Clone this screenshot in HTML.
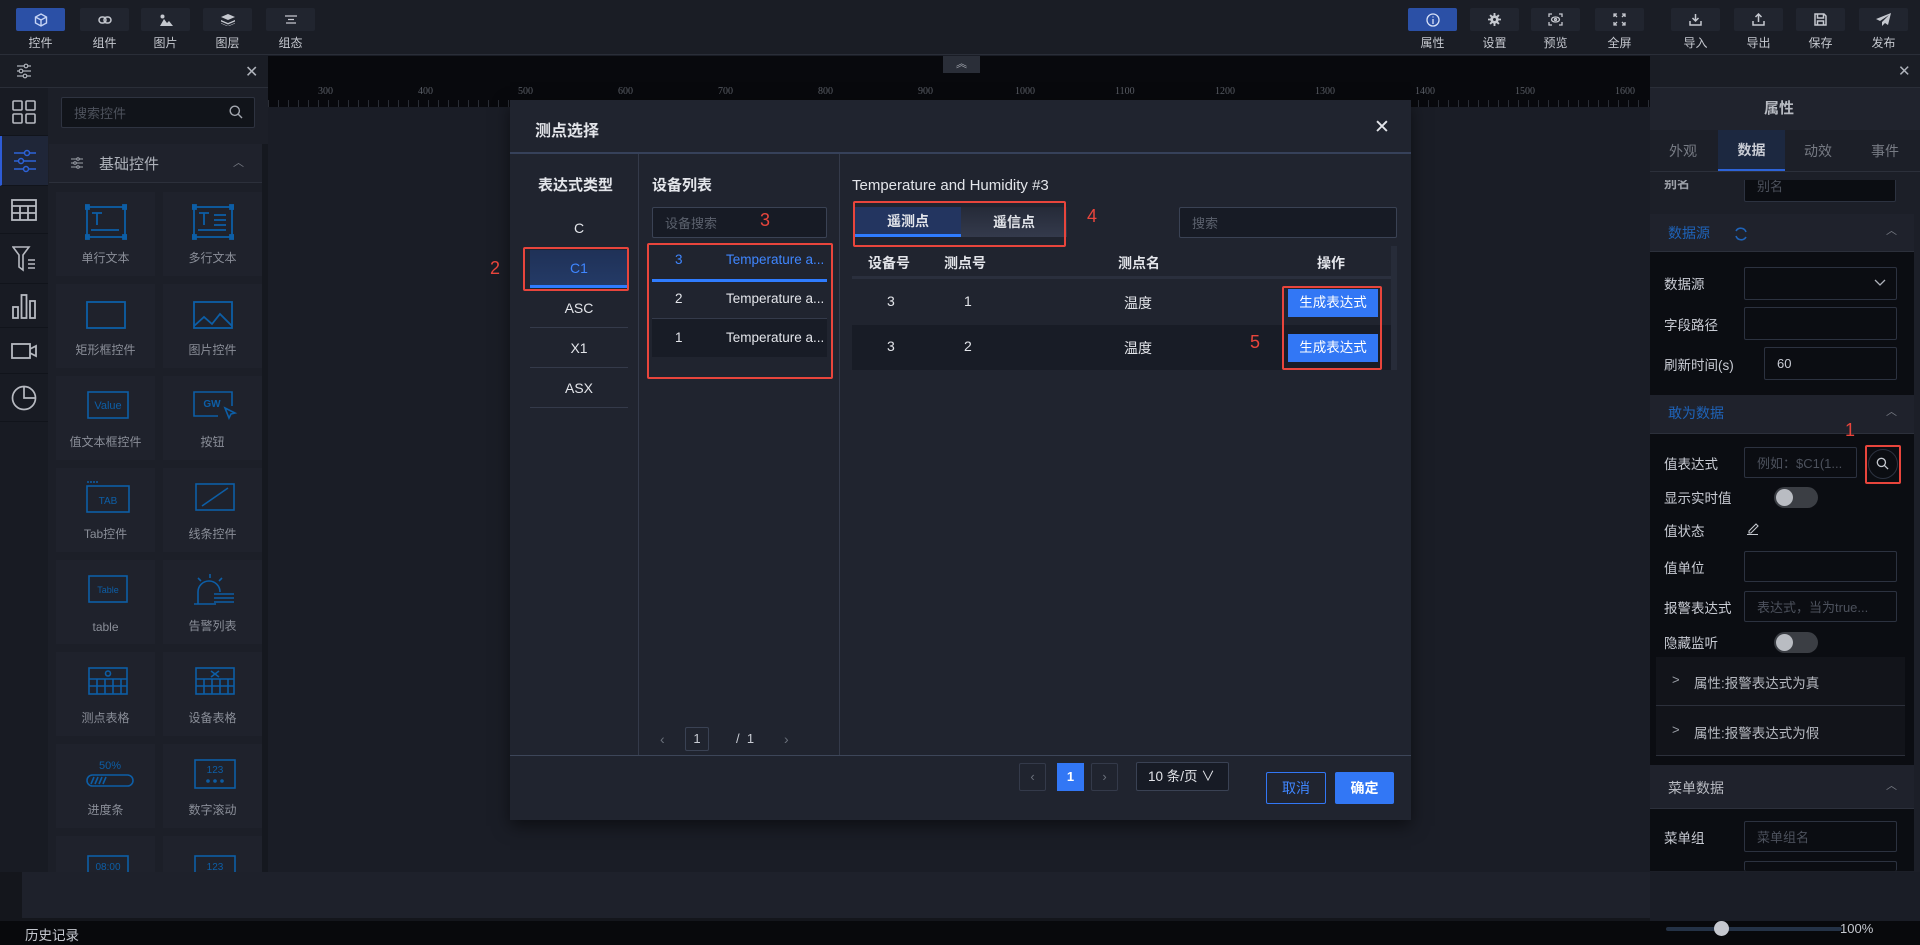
<!DOCTYPE html>
<html><head><meta charset="utf-8"><style>
*{box-sizing:border-box;margin:0;padding:0}
body{width:1920px;height:945px;overflow:hidden;background:#1a1d26;font-family:"Liberation Sans","Noto Sans CJK SC",sans-serif;color:#c9ccd4;font-size:13px;position:relative}
.a{position:absolute}
.tb{position:absolute;top:8px;width:49px;height:23px;background:#21252f;border-radius:2px;display:flex;align-items:center;justify-content:center}
.tl{position:absolute;top:34px;width:49px;text-align:center;font-size:12px;color:#c5c8cf}
.ic{position:absolute;left:0;width:48px;height:48px;display:flex;align-items:center;justify-content:center;border-bottom:1px solid #11141b}
.gi{position:absolute;width:99px;height:84px;background:#1f222c}
.gi .t{position:absolute;bottom:10px;left:0;right:0;text-align:center;font-size:12px;color:#8a8e98}
.gi svg{position:absolute;left:29px;top:12px}
.lbl{position:absolute;left:1664px;font-size:13.5px;color:#c9ccd4;transform:translateY(-50%)}
.inp{position:absolute;border:1px solid #2c3240;background:#0b0d12;border-radius:2px;font-size:13px;color:#4c515c;padding-left:12px;display:flex;align-items:center}
.tog{position:absolute;width:44px;height:21px;border-radius:11px;background:#3b3e44}
.tog:after{content:"";position:absolute;left:2px;top:2px;width:17px;height:17px;border-radius:50%;background:#b9bcc2}
.red{position:absolute;border:2px solid #e8453c;border-radius:2px}
.num{position:absolute;color:#e8453c;font-size:18px}
</style></head><body>
<!-- top bar -->
<div class="a" style="left:0;top:0;width:1920px;height:55px;background:#1a1d25;border-bottom:1px solid #2a2e38"></div>
<div class="tb" style="left:16px;background:#2b50a6"><svg width="14" height="14" viewBox="0 0 14 14" fill="none" stroke="#c6d4f5" stroke-width="1.4"><path d="M7 1L12.5 4v6L7 13 1.5 10V4z M1.5 4L7 7l5.5-3 M7 7v6"/></svg></div><div class="tl" style="left:16px">控件</div>
<div class="tb" style="left:80px"><svg width="14" height="10" viewBox="0 0 14 10" fill="none" stroke="#c5c8cf" stroke-width="1.5"><rect x="1" y="2" width="7" height="6" rx="3"/><rect x="6" y="2" width="7" height="6" rx="3"/></svg></div><div class="tl" style="left:80px">组件</div>
<div class="tb" style="left:141px"><svg width="14" height="12" viewBox="0 0 14 12" fill="#c5c8cf"><circle cx="3.5" cy="2.5" r="2"/><path d="M1 12L5 5l3 4 2-2 4 5z"/></svg></div><div class="tl" style="left:141px">图片</div>
<div class="tb" style="left:203px"><svg width="14" height="12" viewBox="0 0 14 12" fill="#c5c8cf"><path d="M7 0L14 3 7 6 0 3z"/><path d="M0 6l7 3 7-3v1.5L7 10.5 0 7.5z"/><path d="M0 9l7 3 7-3v.5L7 12.5 0 9.5z"/></svg></div><div class="tl" style="left:203px">图层</div>
<div class="tb" style="left:266px"><svg width="12" height="9" viewBox="0 0 12 9" stroke="#c5c8cf" stroke-width="1.3"><path d="M0 1h12M3 4.5h6M1 8h10"/></svg></div><div class="tl" style="left:266px">组态</div>

<div class="tb" style="left:1408px;background:#2b50a6"><svg width="14" height="14" viewBox="0 0 14 14" fill="none" stroke="#d9e2f7" stroke-width="1.3"><circle cx="7" cy="7" r="6"/><path d="M7 6v5M7 3.5v1"/></svg></div><div class="tl" style="left:1408px">属性</div>
<div class="tb" style="left:1470px"><svg width="13" height="13" viewBox="0 0 14 14" fill="#c5c8cf"><circle cx="7" cy="7" r="4.5"/><path d="M6 0h2v3H6zM6 11h2v3H6zM0 6h3v2H0zM11 6h3v2h-3zM1.5 3L3 1.5 5 3.5 3.5 5zM9 10.5l1.5-1.5 2 2-1.5 1.5zM1.5 11L3.5 9 5 10.5 3 12.5zM9 3.5L11 1.5l1.5 1.5-2 2z"/><circle cx="7" cy="7" r="1.6" fill="#21252f"/></svg></div><div class="tl" style="left:1470px">设置</div>
<div class="tb" style="left:1531px"><svg width="15" height="13" viewBox="0 0 15 13" fill="none" stroke="#c5c8cf" stroke-width="1.3"><path d="M1 4V1h3M11 1h3v3M14 9v3h-3M4 12H1V9"/><ellipse cx="7.5" cy="6.5" rx="4" ry="2.5"/><circle cx="7.5" cy="6.5" r="1"/></svg></div><div class="tl" style="left:1531px">预览</div>
<div class="tb" style="left:1595px"><svg width="13" height="13" viewBox="0 0 13 13" fill="none" stroke="#c5c8cf" stroke-width="1.3"><path d="M1 4V1h3M9 1h3v3M12 9v3H9M4 12H1V9M1 1l3 3M12 1L9 4M12 12L9 9M1 12l3-3"/></svg></div><div class="tl" style="left:1595px">全屏</div>
<div class="tb" style="left:1671px"><svg width="13" height="13" viewBox="0 0 13 13" fill="none" stroke="#c5c8cf" stroke-width="1.5"><path d="M6.5 1v7M3.5 5l3 3 3-3M1 8v4h11V8"/></svg></div><div class="tl" style="left:1671px">导入</div>
<div class="tb" style="left:1734px"><svg width="13" height="13" viewBox="0 0 13 13" fill="none" stroke="#c5c8cf" stroke-width="1.5"><path d="M6.5 9V1M3.5 4l3-3 3 3M1 8v4h11V8"/></svg></div><div class="tl" style="left:1734px">导出</div>
<div class="tb" style="left:1796px"><svg width="13" height="13" viewBox="0 0 13 13" fill="none" stroke="#c5c8cf" stroke-width="1.5"><path d="M1 1h9l2 2v9H1z M3.5 1v4h6V1 M3.5 12V8h6v4"/></svg></div><div class="tl" style="left:1796px">保存</div>
<div class="tb" style="left:1859px"><svg width="15" height="13" viewBox="0 0 15 13" fill="#c5c8cf"><path d="M15 0L0 6l4 2 9-6-7 7v4l3-3 3 2z"/></svg></div><div class="tl" style="left:1859px">发布</div>

<!-- left panel -->
<div class="a" style="left:0;top:56px;width:268px;height:816px;background:#1c1f28"></div>
<div class="a" style="left:0;top:56px;width:268px;height:32px;border-bottom:1px solid #2a2e38;background:#1a1d25"></div>
<svg class="a" style="left:16px;top:63px" width="16" height="16" viewBox="0 0 16 16" fill="none" stroke="#aeb2ba" stroke-width="1.2"><path d="M1 3h14M1 8h14M1 13h14"/><circle cx="10" cy="3" r="1.8" fill="#1a1d25"/><circle cx="5" cy="8" r="1.8" fill="#1a1d25"/><circle cx="9" cy="13" r="1.8" fill="#1a1d25"/></svg>
<div class="a" style="left:245px;top:62px;font-size:16px;color:#aeb2ba">✕</div>
<div class="a" style="left:0;top:88px;width:48px;height:784px;background:#181b23"></div>
<div class="ic" style="top:88px"><svg width="24" height="24" viewBox="0 0 24 24" fill="none" stroke="#b7bac1" stroke-width="1.6"><rect x="1" y="1" width="9" height="9" rx="1"/><rect x="14" y="1" width="9" height="9" rx="1"/><rect x="1" y="14" width="9" height="9" rx="1"/><rect x="14" y="14" width="9" height="9" rx="1"/></svg></div>
<div class="ic" style="top:136px;height:50px;background:#1f2638;border-left:2px solid #2d5bd6"><svg width="24" height="24" viewBox="0 0 24 24" fill="none" stroke="#2d63d8" stroke-width="1.5"><path d="M1 4h22M1 12h22M1 20h22"/><circle cx="14" cy="4" r="2.5" fill="#1f2638"/><circle cx="8" cy="12" r="2.5" fill="#1f2638"/><circle cx="13" cy="20" r="2.5" fill="#1f2638"/></svg></div>
<div class="ic" style="top:186px"><svg width="26" height="22" viewBox="0 0 26 22" fill="none" stroke="#b7bac1" stroke-width="1.8"><rect x="1" y="1" width="24" height="20"/><path d="M1 7h24M1 14h24M9 7v14M17 7v14"/></svg></div>
<div class="ic" style="top:234px;height:50px"><svg width="24" height="26" viewBox="0 0 24 26" fill="none" stroke="#b7bac1" stroke-width="1.6"><path d="M1 1h16l-6 8v15l-4-3V9z M16 14h7M16 18h7M16 22h7"/></svg></div>
<div class="ic" style="top:284px;height:44px"><svg width="24" height="26" viewBox="0 0 24 26" fill="none" stroke="#b7bac1" stroke-width="1.8"><rect x="1" y="14" width="5" height="11"/><rect x="9.5" y="2" width="5" height="23"/><rect x="18" y="8" width="5" height="17"/></svg></div>
<div class="ic" style="top:328px;height:46px"><svg width="26" height="18" viewBox="0 0 26 18" fill="none" stroke="#b7bac1" stroke-width="1.8"><rect x="1" y="2" width="18" height="14"/><path d="M19 7l6-3v10l-6-3"/></svg></div>
<div class="ic" style="top:374px;height:48px"><svg width="26" height="26" viewBox="0 0 26 26" fill="none" stroke="#b7bac1" stroke-width="1.7"><circle cx="13" cy="13" r="11.5"/><path d="M13 1.5V13h11.5"/></svg></div>
<div class="inp" style="left:61px;top:97px;width:194px;height:31px;background:#11141a;border-color:#2e3340;color:#4d525c">搜索控件</div>
<svg class="a" style="left:229px;top:105px" width="14" height="14" viewBox="0 0 14 14" fill="none" stroke="#a3a7af" stroke-width="1.4"><circle cx="5.8" cy="5.8" r="4.6"/><path d="M9.3 9.3L13 13"/></svg>
<div class="a" style="left:49px;top:144px;width:213px;height:39px;background:#1f222c;border-bottom:1px solid #2c303b"></div>
<svg class="a" style="left:71px;top:157px" width="12" height="12" viewBox="0 0 12 12" fill="none" stroke="#9da1a9" stroke-width="1"><path d="M0 2h12M0 6h12M0 10h12"/><circle cx="7" cy="2" r="1.3" fill="#1f222c"/><circle cx="4" cy="6" r="1.3" fill="#1f222c"/><circle cx="7" cy="10" r="1.3" fill="#1f222c"/></svg>
<div class="a" style="left:99px;top:153px;font-size:15px;color:#aeb2ba">基础控件</div>
<div class="a" style="left:233px;top:154px;font-size:11px;color:#777b84">︿</div>
<div class="a" style="left:262px;top:144px;width:6px;height:728px;background:#15181f"></div>

<div class="gi" style="left:56px;top:192px"><svg width="42" height="36" viewBox="0 0 42 36" fill="none" stroke="#0d5ea6" stroke-width="1.8"><rect x="2" y="3" width="38" height="30"/><path d="M6 26h28M7 9h10M12 9v12"/><g fill="#0d5ea6"><rect x="0" y="1" width="4" height="4"/><rect x="38" y="1" width="4" height="4"/><rect x="0" y="31" width="4" height="4"/><rect x="38" y="31" width="4" height="4"/></g></svg><div class="t">单行文本</div></div>
<div class="gi" style="left:163px;top:192px"><svg width="42" height="36" viewBox="0 0 42 36" fill="none" stroke="#0d5ea6" stroke-width="1.8"><rect x="2" y="3" width="38" height="30"/><path d="M6 26h28M7 9h10M12 9v12M22 11h12M22 16h12M22 21h12"/><g fill="#0d5ea6"><rect x="0" y="1" width="4" height="4"/><rect x="38" y="1" width="4" height="4"/><rect x="0" y="31" width="4" height="4"/><rect x="38" y="31" width="4" height="4"/></g></svg><div class="t">多行文本</div></div>
<div class="gi" style="left:56px;top:284px"><svg width="42" height="36" viewBox="0 0 42 36" fill="none" stroke="#0d5ea6" stroke-width="1.8"><rect x="2" y="6" width="38" height="26"/></svg><div class="t">矩形框控件</div></div>
<div class="gi" style="left:163px;top:284px"><svg width="42" height="36" viewBox="0 0 42 36" fill="none" stroke="#0d5ea6" stroke-width="1.8"><rect x="2" y="6" width="38" height="26"/><path d="M2 30l10-9 8 7 8-10 12 12"/></svg><div class="t">图片控件</div></div>
<div class="gi" style="left:56px;top:376px"><svg width="46" height="34" viewBox="0 0 46 34" fill="none" stroke="#0d5ea6" stroke-width="1.6"><rect x="3" y="4" width="40" height="26"/><text x="23" y="21" font-size="11" fill="#0d5ea6" stroke="none" text-anchor="middle" font-family="Liberation Sans">Value</text></svg><div class="t">值文本框控件</div></div>
<div class="gi" style="left:163px;top:376px"><svg width="46" height="34" viewBox="0 0 46 34" fill="none" stroke="#0d5ea6" stroke-width="1.6"><path d="M40 18V4H2v24h24"/><path d="M33 20l10 5-4 1-2 4z"/><text x="20" y="19" font-size="10" fill="#0d5ea6" stroke="none" text-anchor="middle" font-family="Liberation Sans" font-weight="bold">GW</text></svg><div class="t">按钮</div></div>
<div class="gi" style="left:56px;top:468px"><svg width="46" height="34" viewBox="0 0 46 34" fill="none" stroke="#0d5ea6" stroke-width="1.6"><rect x="2" y="6" width="42" height="26"/><path d="M2 2h12" stroke-dasharray="2 1"/><text x="23" y="24" font-size="10" fill="#0d5ea6" stroke="none" text-anchor="middle" font-family="Liberation Sans">TAB</text></svg><div class="t">Tab控件</div></div>
<div class="gi" style="left:163px;top:468px"><svg width="46" height="34" viewBox="0 0 46 34" fill="none" stroke="#0d5ea6" stroke-width="1.6"><rect x="4" y="4" width="38" height="26"/><path d="M10 26l26-18"/></svg><div class="t">线条控件</div></div>
<div class="gi" style="left:56px;top:560px"><svg width="46" height="34" viewBox="0 0 46 34" fill="none" stroke="#0d5ea6" stroke-width="1.6"><rect x="4" y="4" width="38" height="26"/><text x="23" y="21" font-size="9" fill="#0d5ea6" stroke="none" text-anchor="middle" font-family="Liberation Sans">Table</text></svg><div class="t">table</div></div>
<div class="gi" style="left:163px;top:560px"><svg width="46" height="34" viewBox="0 0 46 34" fill="none" stroke="#0d5ea6" stroke-width="1.6"><path d="M6 32V20a11 11 0 0 1 22 0 M2 32h22M18 2v4M6 6l3 3M30 6l-3 3M22 22h20M22 26h20M22 30h20"/></svg><div class="t">告警列表</div></div>
<div class="gi" style="left:56px;top:652px"><svg width="46" height="34" viewBox="0 0 46 34" fill="none" stroke="#0d5ea6" stroke-width="1.6"><rect x="4" y="4" width="38" height="26"/><path d="M4 15h38M4 22h38M12 15v15M20 15v15M28 15v15M36 15v15"/><circle cx="23" cy="9.5" r="2.5"/></svg><div class="t">测点表格</div></div>
<div class="gi" style="left:163px;top:652px"><svg width="46" height="34" viewBox="0 0 46 34" fill="none" stroke="#0d5ea6" stroke-width="1.6"><rect x="4" y="4" width="38" height="26"/><path d="M4 15h38M4 22h38M12 15v15M20 15v15M28 15v15M36 15v15M19 7l8 6M27 7l-8 6"/></svg><div class="t">设备表格</div></div>
<div class="gi" style="left:56px;top:744px"><svg width="50" height="34" viewBox="0 0 50 34" fill="none" stroke="#0d5ea6" stroke-width="1.6"><rect x="2" y="19" width="46" height="11" rx="5.5"/><path d="M6 28l3-7M10 28l3-7M14 28l3-7M18 28l3-7"/><text x="25" y="13" font-size="11" fill="#0d5ea6" stroke="none" text-anchor="middle" font-family="Liberation Sans">50%</text></svg><div class="t">进度条</div></div>
<div class="gi" style="left:163px;top:744px"><svg width="46" height="34" viewBox="0 0 46 34" fill="none" stroke="#0d5ea6" stroke-width="1.6"><rect x="3" y="4" width="40" height="28"/><text x="23" y="17" font-size="10" fill="#0d5ea6" stroke="none" text-anchor="middle" font-family="Liberation Sans">123</text><circle cx="16" cy="25" r="1"/><circle cx="23" cy="25" r="1"/><circle cx="30" cy="25" r="1"/></svg><div class="t">数字滚动</div></div>
<div class="gi" style="left:56px;top:836px;height:36px;overflow:hidden"><svg width="46" height="34" viewBox="0 0 46 34" fill="none" stroke="#0d5ea6" stroke-width="1.6"><rect x="3" y="8" width="40" height="28"/><text x="23" y="22" font-size="10" fill="#0d5ea6" stroke="none" text-anchor="middle" font-family="Liberation Sans">08:00</text></svg></div>
<div class="gi" style="left:163px;top:836px;height:36px;overflow:hidden"><svg width="46" height="34" viewBox="0 0 46 34" fill="none" stroke="#0d5ea6" stroke-width="1.6"><rect x="3" y="8" width="40" height="28"/><text x="23" y="22" font-size="10" fill="#0d5ea6" stroke="none" text-anchor="middle" font-family="Liberation Sans">123</text></svg></div>

<!-- canvas ruler -->
<div class="a" style="left:268px;top:56px;width:1382px;height:51px;background:#08090d"></div>
<div class="a" style="left:268px;top:100px;width:1382px;height:7px;background:repeating-linear-gradient(90deg,#2a2d35 0 1px,transparent 1px 10px)"></div>
<div class="a" style="left:943px;top:56px;width:37px;height:17px;background:#2a2e38;color:#aeb2ba;font-size:11px;text-align:center;line-height:17px">︽</div>
<div class="a" style="top:86px;left:0;font-family:'Liberation Serif',serif;font-size:10px;color:#5a5e66">
<span class="a" style="left:318px">300</span><span class="a" style="left:418px">400</span><span class="a" style="left:518px">500</span><span class="a" style="left:618px">600</span><span class="a" style="left:718px">700</span><span class="a" style="left:818px">800</span><span class="a" style="left:918px">900</span><span class="a" style="left:1015px">1000</span><span class="a" style="left:1115px">1100</span><span class="a" style="left:1215px">1200</span><span class="a" style="left:1315px">1300</span><span class="a" style="left:1415px">1400</span><span class="a" style="left:1515px">1500</span><span class="a" style="left:1615px">1600</span></div>

<!-- bottom -->
<div class="a" style="left:0;top:872px;width:1650px;height:49px;background:#14161c"></div>
<div class="a" style="left:22px;top:872px;width:1628px;height:46px;background:#1e212b"></div>
<div class="a" style="left:0;top:921px;width:1920px;height:24px;background:#08090c"></div>
<div class="a" style="left:25px;top:924px;font-size:13.5px;color:#c5c8cf">历史记录</div>
<div class="a" style="left:1666px;top:927px;width:176px;height:4px;background:#243246;border-radius:2px"></div>
<div class="a" style="left:1714px;top:921px;width:15px;height:15px;border-radius:50%;background:#c5c8cf"></div>
<div class="a" style="left:1840px;top:921px;font-size:13px;color:#c5c8cf">100%</div>

<!-- right panel -->
<div class="a" style="left:1650px;top:56px;width:270px;height:816px;background:#1c1f28"></div>
<div class="a" style="left:1650px;top:56px;width:270px;height:32px;background:#1a1d25;border-bottom:1px solid #2a2e38"></div>
<div class="a" style="left:1898px;top:62px;font-size:15px;color:#aeb2ba">✕</div>
<div class="a" style="left:1650px;top:88px;width:270px;height:42px;background:#20232d;text-align:center;line-height:42px;font-size:15px;font-weight:bold;color:#b7bac1;padding-right:12px">属性</div>
<div class="a" style="left:1650px;top:130px;width:270px;height:42px;border-bottom:1px solid #2c303b;font-size:14px;color:#777b84">
<span class="a" style="left:19px;top:11px">外观</span>
<div class="a" style="left:68px;top:0;width:67px;height:41px;background:#1c2840;border-bottom:2px solid #2d63d8;text-align:center;line-height:41px;color:#c9ccd4;font-weight:bold">数据</div>
<span class="a" style="left:154px;top:11px">动效</span><span class="a" style="left:221px;top:11px">事件</span></div>
<div class="a" style="left:1650px;top:180px;width:270px;height:692px;overflow:hidden">
<div class="a" style="left:14px;top:-7px;font-size:13px;color:#9da1a9;font-weight:bold">别名</div>
<div class="inp" style="left:94px;top:-12px;width:152px;height:34px">别名</div>
<div class="a" style="left:0;top:34px;width:264px;height:38px;background:#1f222c;border-bottom:1px solid #2c303b"></div>
<div class="a" style="left:18px;top:43px;font-size:14px;color:#1f63b8">数据源</div>
<svg class="a" style="left:84px;top:47px" width="14" height="14" viewBox="0 0 14 14" fill="none" stroke="#1f63b8" stroke-width="1.6"><path d="M12 5A5.5 5.5 0 0 0 2 4M2 9a5.5 5.5 0 0 0 10 1"/></svg>
<div class="a" style="left:236px;top:42px;font-size:11px;color:#777b84">︿</div>
<div class="a" style="left:0;top:72px;width:264px;height:143px;background:#0b0d12"></div>
</div>
<div class="lbl" style="top:283px">数据源</div>
<div class="inp" style="left:1744px;top:267px;width:153px;height:33px"></div>
<svg class="a" style="left:1874px;top:279px" width="12" height="8" viewBox="0 0 12 8" fill="none" stroke="#aeb2ba" stroke-width="1.3"><path d="M1 1l5 5 5-5"/></svg>
<div class="lbl" style="top:324px">字段路径</div>
<div class="inp" style="left:1744px;top:307px;width:153px;height:33px"></div>
<div class="lbl" style="top:364px">刷新时间(s)</div>
<div class="inp" style="left:1764px;top:347px;width:133px;height:33px;color:#c9ccd4">60</div>
<div class="a" style="left:1650px;top:395px;width:264px;height:39px;background:#1f222c;border-bottom:1px solid #2c303b"></div>
<div class="a" style="left:1668px;top:403px;font-size:14px;color:#1f63b8">敢为数据</div>
<div class="a" style="left:1886px;top:403px;font-size:11px;color:#777b84">︿</div>
<div class="a" style="left:1650px;top:434px;width:264px;height:331px;background:#0b0d12"></div>
<div class="lbl" style="top:463px">值表达式</div>
<div class="inp" style="left:1744px;top:447px;width:113px;height:31px">例如：$C1(1...</div>
<div class="a" style="left:1868px;top:449px;width:30px;height:30px;border-radius:50%;border:1px solid #2c3240"></div>
<svg class="a" style="left:1876px;top:457px" width="13" height="13" viewBox="0 0 14 14" fill="none" stroke="#c5c8cf" stroke-width="1.4"><circle cx="5.8" cy="5.8" r="4.4"/><path d="M9.2 9.2L13 13"/></svg>
<div class="red" style="left:1865px;top:445px;width:36px;height:39px"></div>
<div class="num" style="left:1845px;top:420px">1</div>
<div class="lbl" style="top:497px">显示实时值</div>
<div class="tog" style="left:1774px;top:487px"></div>
<div class="lbl" style="top:530px">值状态</div>
<svg class="a" style="left:1746px;top:522px" width="13" height="13" viewBox="0 0 13 13" fill="none" stroke="#c5c8cf" stroke-width="1.1"><path d="M3 9l7-7 2 2-7 7H3zM1 12.5h11"/></svg>
<div class="lbl" style="top:567px">值单位</div>
<div class="inp" style="left:1744px;top:551px;width:153px;height:31px"></div>
<div class="lbl" style="top:607px">报警表达式</div>
<div class="inp" style="left:1744px;top:591px;width:153px;height:31px">表达式，当为true...</div>
<div class="lbl" style="top:642px">隐藏监听</div>
<div class="tog" style="left:1774px;top:632px"></div>
<div class="a" style="left:1656px;top:657px;width:249px;height:49px;background:#12141a;border-bottom:1px solid #2c303b"></div>
<div class="a" style="left:1672px;top:672px;font-size:13px;color:#9da1a9">&gt;</div>
<div class="a" style="left:1694px;top:672px;font-size:13.5px;color:#b7bac1">属性:报警表达式为真</div>
<div class="a" style="left:1656px;top:706px;width:249px;height:50px;background:#12141a;border-bottom:1px solid #2c303b"></div>
<div class="a" style="left:1672px;top:722px;font-size:13px;color:#9da1a9">&gt;</div>
<div class="a" style="left:1694px;top:722px;font-size:13.5px;color:#b7bac1">属性:报警表达式为假</div>
<div class="a" style="left:1650px;top:765px;width:264px;height:44px;background:#1f222c;border-bottom:1px solid #2c303b"></div>
<div class="a" style="left:1668px;top:778px;font-size:14px;color:#b7bac1">菜单数据</div>
<div class="a" style="left:1886px;top:777px;font-size:11px;color:#777b84">︿</div>
<div class="a" style="left:1650px;top:809px;width:264px;height:62px;background:#0b0d12"></div>
<div class="lbl" style="top:837px">菜单组</div>
<div class="inp" style="left:1744px;top:821px;width:153px;height:31px">菜单组名</div>
<div class="inp" style="left:1744px;top:861px;width:153px;height:10px;border-bottom:none"></div>

<!-- modal -->
<div class="a" style="left:510px;top:100px;width:901px;height:720px;background:#20242f;box-shadow:0 6px 16px rgba(0,0,0,.5)"></div>
<div class="a" style="left:510px;top:152px;width:901px;height:2px;background:#36415a"></div>
<div class="a" style="left:535px;top:117px;font-size:16px;font-weight:bold;color:#e3e5ea">测点选择</div>
<div class="a" style="left:1374px;top:116px;font-size:19px;color:#e3e5ea">✕</div>
<div class="a" style="left:638px;top:154px;width:1px;height:601px;background:#343a4a"></div>
<div class="a" style="left:839px;top:154px;width:1px;height:601px;background:#343a4a"></div>
<div class="a" style="left:510px;top:755px;width:901px;height:1px;background:#3d4659"></div>
<!-- col1 -->
<div class="a" style="left:538px;top:174px;font-size:15px;font-weight:bold;color:#e3e5ea">表达式类型</div>
<div class="a" style="left:530px;top:208px;width:98px;height:40px;text-align:center;line-height:40px;color:#e3e5ea;font-size:14px">C</div>
<div class="a" style="left:530px;top:250px;width:98px;height:38px;background:linear-gradient(#1f3157,#243a66);border-bottom:3px solid #2f7cff;text-align:center;line-height:36px;color:#3f86ff;font-size:14px">C1</div>
<div class="red" style="left:523px;top:247px;width:106px;height:44px"></div>
<div class="num" style="left:490px;top:258px">2</div>
<div class="a" style="left:530px;top:288px;width:98px;height:40px;text-align:center;line-height:40px;color:#e3e5ea;font-size:14px;border-bottom:1px solid #343a4a">ASC</div>
<div class="a" style="left:530px;top:328px;width:98px;height:40px;text-align:center;line-height:40px;color:#e3e5ea;font-size:14px;border-bottom:1px solid #343a4a">X1</div>
<div class="a" style="left:530px;top:368px;width:98px;height:40px;text-align:center;line-height:40px;color:#e3e5ea;font-size:14px;border-bottom:1px solid #343a4a">ASX</div>
<!-- col2 -->
<div class="a" style="left:652px;top:174px;font-size:15px;font-weight:bold;color:#e3e5ea">设备列表</div>
<div class="inp" style="left:652px;top:207px;width:175px;height:31px;background:#171b25;border-color:#3a4254;color:#5b616d">设备搜索</div>
<div class="num" style="left:760px;top:210px">3</div>
<div class="a" style="left:652px;top:245px;width:175px;height:37px;background:#20242f;border-bottom:3px solid #2f7cff"></div>
<div class="a" style="left:675px;top:252px;color:#3f86ff;font-size:13.5px">3</div><div class="a" style="left:726px;top:252px;color:#3f86ff;font-size:13.5px">Temperature a...</div>
<div class="a" style="left:652px;top:282px;width:175px;height:37px;background:#20242f;border-bottom:1px solid #343a4a"></div>
<div class="a" style="left:675px;top:291px;color:#e3e5ea;font-size:13.5px">2</div><div class="a" style="left:726px;top:291px;color:#e3e5ea;font-size:13.5px">Temperature a...</div>
<div class="a" style="left:652px;top:319px;width:175px;height:38px;background:#181c26"></div>
<div class="a" style="left:675px;top:330px;color:#e3e5ea;font-size:13.5px">1</div><div class="a" style="left:726px;top:330px;color:#e3e5ea;font-size:13.5px">Temperature a...</div>
<div class="red" style="left:647px;top:243px;width:186px;height:136px"></div>
<div class="a" style="left:660px;top:731px;color:#6b717c;font-size:14px">‹</div>
<div class="a" style="left:685px;top:727px;width:24px;height:24px;border:1px solid #3a4254;border-radius:2px;text-align:center;line-height:22px;color:#c9ccd4">1</div>
<div class="a" style="left:736px;top:731px;color:#c9ccd4">/ &nbsp;1</div>
<div class="a" style="left:784px;top:731px;color:#6b717c;font-size:14px">›</div>
<!-- col3 -->
<div class="a" style="left:852px;top:177px;font-size:15px;color:#e3e5ea">Temperature and Humidity #3</div>
<div class="a" style="left:855px;top:207px;width:106px;height:30px;background:#233560;border-bottom:3px solid #2f7cff;text-align:center;line-height:28px;color:#e3e5ea;font-weight:bold;font-size:14px">遥测点</div>
<div class="a" style="left:961px;top:207px;width:106px;height:30px;background:linear-gradient(#252a38,#343a4c);text-align:center;line-height:30px;color:#e3e5ea;font-weight:bold;font-size:14px">遥信点</div>
<div class="red" style="left:853px;top:201px;width:213px;height:46px"></div>
<div class="num" style="left:1087px;top:206px">4</div>
<div class="inp" style="left:1179px;top:207px;width:218px;height:31px;background:#171b25;border-color:#3a4254;color:#5b616d">搜索</div>
<div class="a" style="left:852px;top:246px;width:539px;height:33px;border-bottom:3px solid #2a2f3d;font-weight:bold;color:#e3e5ea;font-size:14px">
<span class="a" style="left:16px;top:7px">设备号</span><span class="a" style="left:92px;top:7px">测点号</span><span class="a" style="left:266px;top:7px">测点名</span><span class="a" style="left:465px;top:7px">操作</span></div>
<div class="a" style="left:1391px;top:246px;width:6px;height:124px;background:#272c39"></div>
<div class="a" style="left:852px;top:280px;width:539px;height:45px;color:#e3e5ea;font-size:14px">
<span class="a" style="left:35px;top:13px">3</span><span class="a" style="left:112px;top:13px">1</span><span class="a" style="left:272px;top:13px">温度</span></div>
<div class="a" style="left:852px;top:325px;width:539px;height:45px;background:#181c26;color:#e3e5ea;font-size:14px">
<span class="a" style="left:35px;top:13px">3</span><span class="a" style="left:112px;top:13px">2</span><span class="a" style="left:272px;top:13px">温度</span></div>
<div class="a" style="left:1288px;top:289px;width:90px;height:28px;background:#3277f5;color:#fff;text-align:center;line-height:28px;font-size:13.5px">生成表达式</div>
<div class="a" style="left:1288px;top:334px;width:90px;height:28px;background:#3277f5;color:#fff;text-align:center;line-height:28px;font-size:13.5px">生成表达式</div>
<div class="red" style="left:1282px;top:286px;width:100px;height:84px"></div>
<div class="num" style="left:1250px;top:332px">5</div>
<!-- footer -->
<div class="a" style="left:1019px;top:763px;width:27px;height:28px;border:1px solid #343a4a;border-radius:2px;color:#6b717c;text-align:center;line-height:26px">‹</div>
<div class="a" style="left:1057px;top:763px;width:27px;height:28px;background:#3277f5;color:#fff;text-align:center;line-height:28px;font-weight:bold">1</div>
<div class="a" style="left:1091px;top:763px;width:27px;height:28px;border:1px solid #343a4a;border-radius:2px;color:#6b717c;text-align:center;line-height:26px">›</div>
<div class="a" style="left:1136px;top:762px;width:93px;height:29px;border:1px solid #3a4254;background:#171b25;border-radius:2px;color:#e3e5ea;line-height:27px;padding-left:11px;font-size:13.5px">10 条/页 ∨</div>
<div class="a" style="left:1266px;top:772px;width:60px;height:32px;border:1px solid #3277f5;border-radius:2px;color:#3f86ff;text-align:center;line-height:30px;font-size:14px">取消</div>
<div class="a" style="left:1335px;top:772px;width:59px;height:32px;background:#3277f5;border-radius:2px;color:#fff;text-align:center;line-height:32px;font-size:14px;font-weight:bold">确定</div>
</body></html>
